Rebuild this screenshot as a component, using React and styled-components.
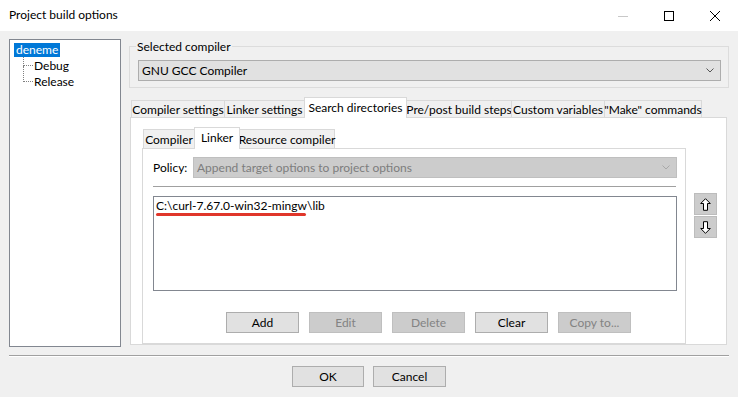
import React from "react";
import styled, { createGlobalStyle } from "styled-components";

const GlobalStyle = createGlobalStyle`
  html, body { margin: 0; padding: 0; background: #f0f0f0; }
  body { font-family: Lato, "Noto Sans", "Liberation Sans", sans-serif; font-size: 12px; color: #000; }
  * { box-sizing: border-box; }
`;

const Window = styled.div`
  width: 738px;
  height: 397px;
  background: #f0f0f0;
  display: flex;
  flex-direction: column;
  overflow: hidden;
`;

const TitleBar = styled.div`
  height: 31px;
  flex: none;
  background: #fff;
  display: flex;
  align-items: center;
  padding-left: 9px;
`;

const Title = styled.div`
  flex: 1;
  font-size: 12px;
  line-height: 16px;
  margin-top: -1px;
`;

const CaptionButton = styled.div`
  width: 46px;
  height: 31px;
  display: flex;
  align-items: center;
  justify-content: center;
`;

const Body = styled.div`
  display: flex;
  gap: 8px;
  padding: 8px 9px 0 9px;
  height: 316px;
  flex: none;
`;

const Tree = styled.div`
  width: 112px;
  height: 308px;
  flex: none;
  background: #fff;
  border: 1px solid #828790;
  padding: 2px 4px;
`;

const TreeRow = styled.div`
  position: relative;
  height: 16px;
  display: flex;
  align-items: center;
  padding-left: ${(p) => (p.$child ? "18px" : "0")};
  &::before {
    content: "";
    display: ${(p) => (p.$child ? "block" : "none")};
    position: absolute;
    left: 9px;
    top: ${(p) => (p.$first ? "-1px" : "-8px")};
    height: ${(p) => (p.$first ? "8px" : "15px")};
    width: 9px;
    border-left: 1px dotted #808080;
    border-bottom: 1px dotted #808080;
  }
`;

const TreeLabel = styled.span`
  display: inline-block;
  height: 14px;
  line-height: 14px;
  padding: 0 2px;
  background: ${(p) => (p.$selected ? "#0078d7" : "transparent")};
  color: ${(p) => (p.$selected ? "#fff" : "#000")};
`;

const RightCol = styled.div`
  width: 600px;
  display: flex;
  flex-direction: column;
`;

const GroupBox = styled.fieldset`
  margin: 0;
  padding: 6px 7px 6px 8px;
  border: 1px solid #dcdcdc;
  min-width: 0;
  flex: none;
`;

const Legend = styled.legend`
  padding: 0 1px;
  margin-left: -2px;
  line-height: 15px;
`;

const Combo = styled.div`
  height: 21px;
  display: flex;
  align-items: center;
  justify-content: space-between;
  padding: 0 6px 0 3px;
  background: ${(p) => (p.$disabled ? "#cccccc" : "#e1e1e1")};
  border: 1px solid ${(p) => (p.$disabled ? "#bfbfbf" : "#adadad")};
  color: ${(p) => (p.$disabled ? "#7d7d7d" : "#000")};
  flex: ${(p) => (p.$disabled ? "1" : "none")};
`;

const Chevron = ({ color }) => (
  <svg width="8" height="5" viewBox="0 0 8 5">
    <path d="M0.5 0.5 L4 4 L7.5 0.5" fill="none" stroke={color} strokeWidth="1" />
  </svg>
);

const TabRow = styled.div`
  display: flex;
  align-items: flex-end;
  height: 20px;
  margin-top: 9px;
  padding-left: ${(p) => p.$pad}px;
  flex: none;
`;

const Tab = styled.div`
  position: relative;
  width: ${(p) => p.$w}px;
  height: ${(p) => (p.$active ? p.$ah : p.$h)}px;
  margin-left: ${(p) => (p.$first ? "0" : "-1px")};
  margin-bottom: ${(p) => (p.$active ? "-1px" : "0")};
  z-index: ${(p) => (p.$active ? 1 : 0)};
  background: ${(p) => (p.$active ? "#fff" : "#f0f0f0")};
  border: 1px solid #d9d9d9;
  border-bottom: none;
  display: flex;
  align-items: center;
  justify-content: center;
  padding-bottom: ${(p) => (p.$active ? "2px" : "0")};
  white-space: nowrap;
  flex: none;
`;

const TabPanel = styled.div`
  margin-left: 1px;
  width: 597px;
  height: 228px;
  background: #fff;
  border: 1px solid #d9d9d9;
  padding: 9px 0 0 11px;
  display: flex;
  flex: none;
`;

const InnerTabs = styled.div`
  width: 544px;
  display: flex;
  flex-direction: column;
`;

const InnerTabRow = styled.div`
  display: flex;
  align-items: flex-end;
  height: 21px;
  padding-left: 1px;
`;

const InnerPanel = styled.div`
  width: 544px;
  height: 196px;
  background: #fff;
  border: 1px solid #d9d9d9;
  padding: 8px 8px 0 10px;
  display: flex;
  flex-direction: column;
`;

const PolicyRow = styled.div`
  display: flex;
  align-items: center;
  height: 21px;
`;

const PolicyLabel = styled.div`
  width: 40px;
  flex: none;
`;

const Separator = styled.div`
  height: 1px;
  background: #a0a0a0;
  margin: 8px 1px 0 0;
`;

const ListBox = styled.div`
  margin-top: 9px;
  height: 95px;
  border: 1px solid #828790;
  padding: 2px 2px;
`;

const ListItem = styled.div`
  line-height: 14px;
  height: 14px;
  white-space: nowrap;
`;

const Underline = styled.div`
  width: 150px;
  height: 3px;
  margin-top: 0px;
  background: #e0362a;
  border-radius: 2px;
`;

const ButtonRow = styled.div`
  display: flex;
  gap: ${(p) => p.$gap}px;
  margin-top: ${(p) => p.$mt}px;
  padding-left: ${(p) => p.$pl || 0}px;
  justify-content: ${(p) => (p.$center ? "center" : "flex-start")};
  flex: none;
`;

const Button = styled.div`
  width: ${(p) => p.$w || 73}px;
  height: 21px;
  display: flex;
  align-items: center;
  justify-content: center;
  background: ${(p) => (p.$disabled ? "#cccccc" : "#e1e1e1")};
  border: 1px solid ${(p) => (p.$disabled ? "#bfbfbf" : "#adadad")};
  color: ${(p) => (p.$disabled ? "#838383" : "#000")};
`;

const SideButtons = styled.div`
  display: flex;
  flex-direction: column;
  gap: 1px;
  margin: 66px 0 0 8px;
`;

const ArrowButton = styled.div`
  width: 23px;
  height: 22px;
  background: #cccccc;
  border: 1px solid #bcbcbc;
  display: flex;
  align-items: center;
  justify-content: center;
`;

const ArrowUp = () => (
  <svg width="11" height="13" viewBox="0 0 11 13">
    <path d="M5.5 0.7 L10.3 5.5 L7.5 5.5 L7.5 12.3 L3.5 12.3 L3.5 5.5 L0.7 5.5 Z" fill="#fff" stroke="#000" strokeWidth="1" strokeLinejoin="miter" />
  </svg>
);

const ArrowDown = () => (
  <svg width="11" height="13" viewBox="0 0 11 13">
    <path d="M5.5 12.3 L10.3 7.5 L7.5 7.5 L7.5 0.7 L3.5 0.7 L3.5 7.5 L0.7 7.5 Z" fill="#fff" stroke="#000" strokeWidth="1" strokeLinejoin="miter" />
  </svg>
);

const FooterSep = styled.div`
  margin: 8px 9px 0 9px;
  height: 2px;
  border-top: 1px solid #a0a0a0;
  border-bottom: 1px solid #fff;
  flex: none;
`;

const outerTabs = [
  { label: "Compiler settings", w: 94 },
  { label: "Linker settings", w: 81 },
  { label: "Search directories", w: 103, active: true },
  { label: "Pre/post build steps", w: 106 },
  { label: "Custom variables", w: 94 },
  { label: "\"Make\" commands", w: 98 },
];

const innerTabs = [
  { label: "Compiler", w: 52 },
  { label: "Linker", w: 46, active: true },
  { label: "Resource compiler", w: 96 },
];

export default function App() {
  return (
    <Window>
      <GlobalStyle />
      <TitleBar>
        <Title>Project build options</Title>
        <CaptionButton>
          <svg width="10" height="10" viewBox="0 0 10 10">
            <path d="M0 5.5 H10" stroke="#c8c8c8" strokeWidth="1" />
          </svg>
        </CaptionButton>
        <CaptionButton>
          <svg width="10" height="10" viewBox="0 0 10 10">
            <rect x="0.5" y="0.5" width="9" height="9" fill="none" stroke="#000" strokeWidth="1" />
          </svg>
        </CaptionButton>
        <CaptionButton>
          <svg width="10" height="10" viewBox="0 0 10 10">
            <path d="M0 0 L10 10 M10 0 L0 10" stroke="#000" strokeWidth="1" />
          </svg>
        </CaptionButton>
      </TitleBar>
      <Body>
        <Tree>
          <TreeRow>
            <TreeLabel $selected>deneme</TreeLabel>
          </TreeRow>
          <TreeRow $child $first>
            <TreeLabel>Debug</TreeLabel>
          </TreeRow>
          <TreeRow $child>
            <TreeLabel>Release</TreeLabel>
          </TreeRow>
        </Tree>
        <RightCol>
          <GroupBox>
            <Legend>Selected compiler</Legend>
            <Combo>
              <span>GNU GCC Compiler</span>
              <Chevron color="#555" />
            </Combo>
          </GroupBox>
          <TabRow $pad={2}>
            {outerTabs.map((t, i) => (
              <Tab key={t.label} $w={t.w} $h={17} $ah={21} $active={t.active} $first={i === 0}>
                {t.label}
              </Tab>
            ))}
          </TabRow>
          <TabPanel>
            <InnerTabs>
              <InnerTabRow>
                {innerTabs.map((t, i) => (
                  <Tab key={t.label} $w={t.w} $h={19} $ah={22} $active={t.active} $first={i === 0}>
                    {t.label}
                  </Tab>
                ))}
              </InnerTabRow>
              <InnerPanel>
                <PolicyRow>
                  <PolicyLabel>Policy:</PolicyLabel>
                  <Combo $disabled>
                    <span>Append target options to project options</span>
                    <Chevron color="#a8a8a8" />
                  </Combo>
                </PolicyRow>
                <Separator />
                <ListBox>
                  <ListItem>C:\curl-7.67.0-win32-mingw\lib</ListItem>
                  <Underline />
                </ListBox>
                <ButtonRow $gap={10} $mt={21} $pl={73}>
                  <Button>Add</Button>
                  <Button $disabled>Edit</Button>
                  <Button $disabled>Delete</Button>
                  <Button>Clear</Button>
                  <Button $disabled>Copy to...</Button>
                </ButtonRow>
              </InnerPanel>
            </InnerTabs>
            <SideButtons>
              <ArrowButton><ArrowUp /></ArrowButton>
              <ArrowButton><ArrowDown /></ArrowButton>
            </SideButtons>
          </TabPanel>
        </RightCol>
      </Body>
      <FooterSep />
      <ButtonRow $gap={9} $mt={9} $center>
        <Button $w={72}>OK</Button>
        <Button>Cancel</Button>
      </ButtonRow>
    </Window>
  );
}
